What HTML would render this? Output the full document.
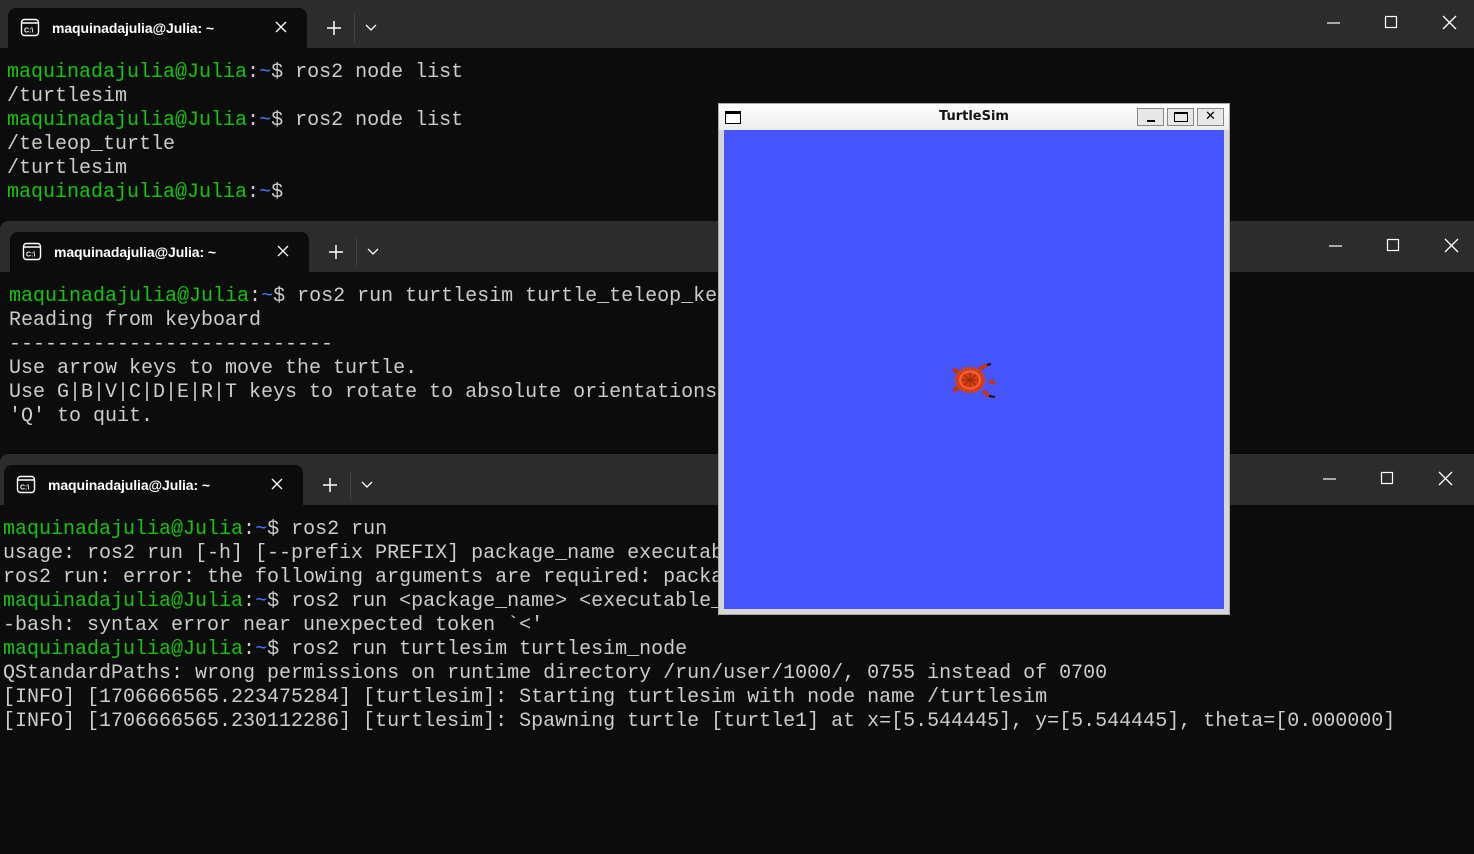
<!DOCTYPE html>
<html><head><meta charset="utf-8"><style>
*{margin:0;padding:0;box-sizing:border-box}
body{width:1474px;height:854px;background:#0c0c0c;overflow:hidden;position:relative;font-family:"Liberation Sans",sans-serif}
.win{position:absolute;left:0;right:0;background:#0c0c0c;border-radius:8px 0 0 0}
.bar{position:absolute;left:0;right:0;top:0;height:51px;background:#2c2c2c;border-radius:8px 0 0 0}
.tab{position:absolute;width:299px;height:40px;background:#0c0c0c;border-radius:8px 8px 0 0}
.tab .t{position:absolute;left:44px;top:12px;color:#fff;font-size:14px;font-weight:bold;letter-spacing:-0.1px}
.tab svg.ic{position:absolute;left:12px;top:10px}
.tab .x{position:absolute;left:265px;top:11px}
.plus{position:absolute;top:11px}
.sep{position:absolute;width:1px;height:28px;background:#444}
.ctl{position:absolute;top:0}
pre{position:absolute;font-family:"Liberation Mono",monospace;font-size:20px;line-height:24px;color:#cccccc;white-space:pre}
.g{color:#16c60c}.b{color:#3b78ff}
</style></head><body>

<!-- window 1 -->
<div class="win" style="top:0;height:222px;border-radius:0">
<div class="bar" style="height:48px;border-radius:0"></div>
<div class="tab" style="left:8px;top:8px">
<svg class="ic" width="22" height="20" viewBox="0 0 22 20"><rect x="1.5" y="1.5" width="17" height="16" rx="3" fill="none" stroke="#fff" stroke-width="1.4"/><line x1="1.5" y1="5" x2="18.5" y2="5" stroke="#fff" stroke-width="1.4"/><text x="4" y="14.5" font-size="7" fill="#fff" font-family="Liberation Sans" font-weight="bold">C:\</text></svg>
<span class="t">maquinadajulia@Julia: ~</span>
<svg class="x" width="16" height="16"><path d="M3 3L13 13M13 3L3 13" stroke="#fff" stroke-width="1.3"/></svg></div>
<svg class="plus" style="left:326px;top:20px" width="16" height="16"><path d="M8 1V15M1 8H15" stroke="#fff" stroke-width="1.5"/></svg>
<div class="sep" style="left:354px;top:14px"></div>
<svg class="plus" style="left:365px;top:24px" width="12" height="8"><path d="M1 1L6 6L11 1" stroke="#fff" fill="none" stroke-width="1.3"/></svg>
<svg class="ctl" style="left:1320px;top:12px" width="145" height="22"><path d="M7 11H20" stroke="#fff" stroke-width="1.2"/><rect x="65.5" y="4.5" width="11" height="11" fill="none" stroke="#fff" stroke-width="1.2"/><path d="M123 4L136 17M136 4L123 17" stroke="#fff" stroke-width="1.3"/></svg>
<pre style="left:7px;top:61px"><span class="g">maquinadajulia@Julia</span>:<span class="b">~</span>$ ros2 node list
/turtlesim
<span class="g">maquinadajulia@Julia</span>:<span class="b">~</span>$ ros2 node list
/teleop_turtle
/turtlesim
<span class="g">maquinadajulia@Julia</span>:<span class="b">~</span>$</pre>
</div>

<!-- window 2 -->
<div class="win" style="top:221px;height:234px">
<div class="bar"></div>
<div class="tab" style="left:10px;top:11px">
<svg class="ic" width="22" height="20" viewBox="0 0 22 20"><rect x="1.5" y="1.5" width="17" height="16" rx="3" fill="none" stroke="#fff" stroke-width="1.4"/><line x1="1.5" y1="5" x2="18.5" y2="5" stroke="#fff" stroke-width="1.4"/><text x="4" y="14.5" font-size="7" fill="#fff" font-family="Liberation Sans" font-weight="bold">C:\</text></svg>
<span class="t">maquinadajulia@Julia: ~</span>
<svg class="x" width="16" height="16"><path d="M3 3L13 13M13 3L3 13" stroke="#fff" stroke-width="1.3"/></svg></div>
<svg class="plus" style="left:328px;top:23px" width="16" height="16"><path d="M8 1V15M1 8H15" stroke="#fff" stroke-width="1.5"/></svg>
<div class="sep" style="left:356px;top:17px"></div>
<svg class="plus" style="left:367px;top:27px" width="12" height="8"><path d="M1 1L6 6L11 1" stroke="#fff" fill="none" stroke-width="1.3"/></svg>
<svg class="ctl" style="left:1322px;top:14px" width="145" height="22"><path d="M7 11H20" stroke="#fff" stroke-width="1.2"/><rect x="65.5" y="4.5" width="11" height="11" fill="none" stroke="#fff" stroke-width="1.2"/><path d="M123 4L136 17M136 4L123 17" stroke="#fff" stroke-width="1.3"/></svg>
<pre style="left:9px;top:64px"><span class="g">maquinadajulia@Julia</span>:<span class="b">~</span>$ ros2 run turtlesim turtle_teleop_key
Reading from keyboard
---------------------------
Use arrow keys to move the turtle.
Use G|B|V|C|D|E|R|T keys to rotate to absolute orientations. 'F' to cancel a rotation.
'Q' to quit.</pre>
</div>

<!-- window 3 -->
<div class="win" style="top:454px;height:400px">
<div class="bar"></div>
<div class="tab" style="left:4px;top:11px">
<svg class="ic" width="22" height="20" viewBox="0 0 22 20"><rect x="1.5" y="1.5" width="17" height="16" rx="3" fill="none" stroke="#fff" stroke-width="1.4"/><line x1="1.5" y1="5" x2="18.5" y2="5" stroke="#fff" stroke-width="1.4"/><text x="4" y="14.5" font-size="7" fill="#fff" font-family="Liberation Sans" font-weight="bold">C:\</text></svg>
<span class="t">maquinadajulia@Julia: ~</span>
<svg class="x" width="16" height="16"><path d="M3 3L13 13M13 3L3 13" stroke="#fff" stroke-width="1.3"/></svg></div>
<svg class="plus" style="left:322px;top:23px" width="16" height="16"><path d="M8 1V15M1 8H15" stroke="#fff" stroke-width="1.5"/></svg>
<div class="sep" style="left:350px;top:17px"></div>
<svg class="plus" style="left:361px;top:27px" width="12" height="8"><path d="M1 1L6 6L11 1" stroke="#fff" fill="none" stroke-width="1.3"/></svg>
<svg class="ctl" style="left:1316px;top:14px" width="145" height="22"><path d="M7 11H20" stroke="#fff" stroke-width="1.2"/><rect x="65.5" y="4.5" width="11" height="11" fill="none" stroke="#fff" stroke-width="1.2"/><path d="M123 4L136 17M136 4L123 17" stroke="#fff" stroke-width="1.3"/></svg>
<pre style="left:3px;top:64px"><span class="g">maquinadajulia@Julia</span>:<span class="b">~</span>$ ros2 run
usage: ros2 run [-h] [--prefix PREFIX] package_name executable_name ...
ros2 run: error: the following arguments are required: package_name
<span class="g">maquinadajulia@Julia</span>:<span class="b">~</span>$ ros2 run &lt;package_name&gt; &lt;executable_name&gt;
-bash: syntax error near unexpected token `&lt;'
<span class="g">maquinadajulia@Julia</span>:<span class="b">~</span>$ ros2 run turtlesim turtlesim_node
QStandardPaths: wrong permissions on runtime directory /run/user/1000/, 0755 instead of 0700
[INFO] [1706666565.223475284] [turtlesim]: Starting turtlesim with node name /turtlesim
[INFO] [1706666565.230112286] [turtlesim]: Spawning turtle [turtle1] at x=[5.544445], y=[5.544445], theta=[0.000000]</pre>
</div>

<!-- turtlesim -->
<div style="position:absolute;left:718px;top:103px;width:512px;height:512px;background:#d6d6d6;border:1px solid #aaa">
<div style="position:absolute;left:0;top:0;right:0;height:26px;background:linear-gradient(#fff,#ececec)"></div>
<div style="position:absolute;left:6px;top:7px;width:16px;height:13px;border:1.5px solid #000;border-top-width:3px;background:#fff"></div>
<div style="position:absolute;left:0;right:0;top:5px;text-align:center;font-family:'DejaVu Sans',sans-serif;font-weight:bold;font-size:13px;color:#111">TurtleSim</div>
<div style="position:absolute;left:418px;top:4px;width:27px;height:18px;border:1px solid #888;background:#e8e8e8"><div style="position:absolute;left:9px;top:11px;width:8px;height:2px;background:#000"></div></div>
<div style="position:absolute;left:448px;top:4px;width:27px;height:18px;border:1px solid #888;background:#e8e8e8"><div style="position:absolute;left:6px;top:3px;width:14px;height:10px;border:1.5px solid #000;border-top-width:2.5px"></div></div>
<div style="position:absolute;left:478px;top:4px;width:27px;height:18px;border:1px solid #888;background:#e8e8e8;text-align:center;font:bold 13px 'DejaVu Sans';line-height:16px">✕</div>
<div style="position:absolute;left:5px;top:26px;width:500px;height:479px;background:#4556ff">
<svg style="position:absolute;left:225px;top:231px" width="50" height="40" viewBox="0 0 50 40">
<path d="M4 8L12 13M4 30L12 25M30 8L38 4M40 20L46 22M34 30L40 35" stroke="#c83010" stroke-width="4"/>
<path d="M38 4L42 3M40 35L46 36" stroke="#111" stroke-width="2"/>
<ellipse cx="21" cy="19" rx="15" ry="13" fill="#d04018"/>
<ellipse cx="21" cy="19" rx="10" ry="8.5" fill="none" stroke="#ff6030" stroke-width="2"/>
<path d="M13 19H29M21 12V26M15 14L27 24M27 14L15 24" stroke="#a02808" stroke-width="1.2"/>
</svg>
</div>
</div>
</body></html>
